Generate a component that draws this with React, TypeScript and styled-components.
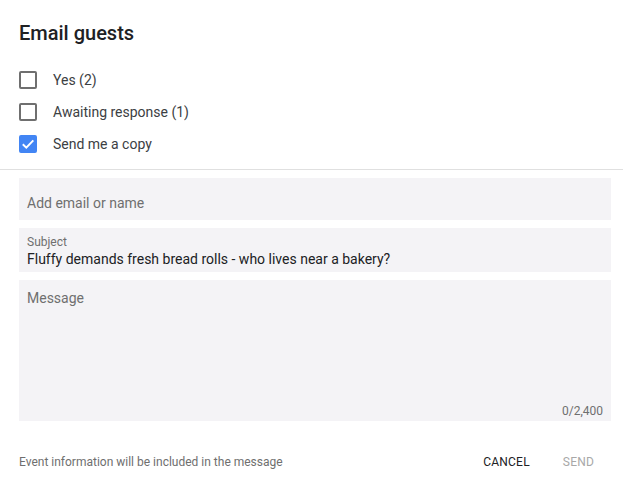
import styled, { createGlobalStyle } from 'styled-components';

const GlobalStyle = createGlobalStyle`
  html, body {
    margin: 0;
    padding: 0;
    background: #ffffff;
    font-family: Roboto, "Liberation Sans", Arial, sans-serif;
    color: #202124;
  }
  * {
    box-sizing: border-box;
  }
`;

const Dialog = styled.div`
  width: 623px;
  height: 483px;
  background: #fff;
  display: flex;
  flex-direction: column;
`;

const Header = styled.div`
  padding: 21px 12px 0 19px;
`;

const Title = styled.h2`
  margin: 0;
  font-size: 20px;
  line-height: 24px;
  font-weight: 500;
  color: #202124;
`;

const Options = styled.div`
  display: flex;
  flex-direction: column;
  margin-top: 19px;
  padding-bottom: 9px;
`;

const OptionRow = styled.label`
  display: flex;
  align-items: center;
  gap: 16px;
  height: 32px;
  font-size: 14px;
  color: #3c4043;
`;

const Box = styled.span<{ checked: boolean }>`
  width: 18px;
  height: 18px;
  flex-shrink: 0;
  border-radius: 2px;
  border: 2px solid ${p => (p.checked ? '#4285f4' : '#6f6f6f')};
  background: ${p => (p.checked ? '#4285f4' : 'transparent')};
  display: flex;
  align-items: center;
  justify-content: center;

  svg {
    flex-shrink: 0;
    display: block;
  }
`;

const Divider = styled.div`
  height: 1px;
  background: #e0e0e0;
`;

const Form = styled.div`
  display: flex;
  flex-direction: column;
  gap: 8px;
  padding: 8px 12px 0 19px;
`;

const Field = styled.div<{ h: number; top: number }>`
  background: #f4f3f6;
  height: ${p => p.h}px;
  padding: ${p => p.top}px 8px 0;
  display: flex;
  flex-direction: column;
  position: relative;
`;

const Placeholder = styled.div`
  font-size: 14px;
  color: #6f6f6f;
  line-height: 20px;
`;

const SmallLabel = styled.div`
  font-size: 12px;
  line-height: 14px;
  color: #6f6f6f;
`;

const Value = styled.div`
  font-size: 14px;
  line-height: 20px;
  color: #202124;
`;

const Counter = styled.div`
  position: absolute;
  right: 8px;
  bottom: 3px;
  font-size: 12px;
  color: #6f6f6f;
`;

const Footer = styled.div`
  display: flex;
  align-items: center;
  padding: 0 29px 0 19px;
  margin-top: 31px;
  height: 20px;
`;

const Note = styled.div`
  flex: 1;
  font-size: 12px;
  color: #6f6f6f;
`;

const Action = styled.button<{ disabled?: boolean }>`
  background: none;
  border: none;
  padding: 0;
  font-family: inherit;
  font-size: 12px;
  font-weight: 400;
  letter-spacing: 0.2px;
  color: ${p => (p.disabled ? '#a8a8a8' : '#202124')};
  margin-left: 33px;
  cursor: pointer;
`;

const options = [
  { label: 'Yes (2)', checked: false },
  { label: 'Awaiting response (1)', checked: false },
  { label: 'Send me a copy', checked: true },
];

export default function App() {
  return (
    <Dialog>
      <GlobalStyle />
      <Header>
        <Title>Email guests</Title>
        <Options>
          {options.map(o => (
            <OptionRow key={o.label}>
              <Box checked={o.checked}>
                {o.checked && (
                  <svg width="14" height="14" viewBox="0 0 14 14">
                    <path d="M1.8 7.2l3.5 3.4 7-7.2" fill="none" stroke="#fff" strokeWidth="2" />
                  </svg>
                )}
              </Box>
              {o.label}
            </OptionRow>
          ))}
        </Options>
      </Header>
      <Divider />
      <Form>
        <Field h={42} top={15}>
          <Placeholder>Add email or name</Placeholder>
        </Field>
        <Field h={44} top={7}>
          <SmallLabel>Subject</SmallLabel>
          <Value>Fluffy demands fresh bread rolls - who lives near a bakery?</Value>
        </Field>
        <Field h={141} top={8}>
          <Placeholder>Message</Placeholder>
          <Counter>0/2,400</Counter>
        </Field>
      </Form>
      <Footer>
        <Note>Event information will be included in the message</Note>
        <Action>CANCEL</Action>
        <Action disabled>SEND</Action>
      </Footer>
    </Dialog>
  );
}
